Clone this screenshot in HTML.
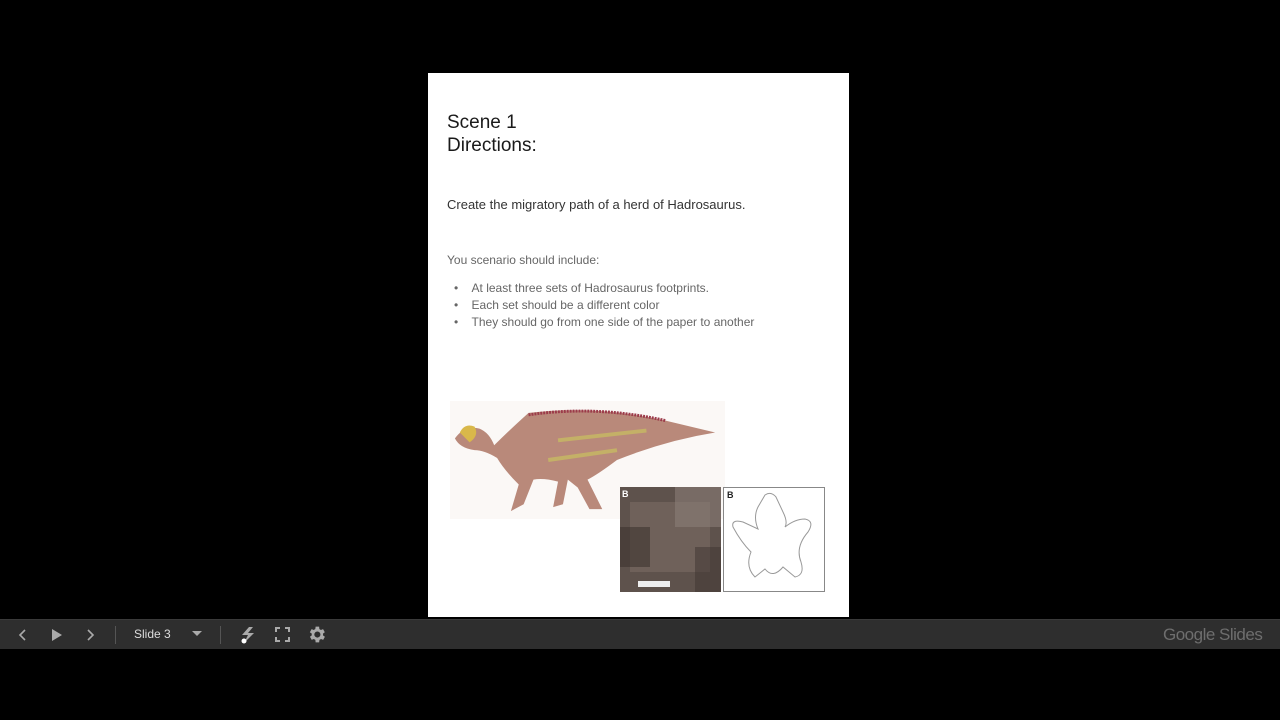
<!DOCTYPE html>
<html><head><meta charset="utf-8"><style>
html,body{margin:0;padding:0;background:#000;width:1280px;height:720px;overflow:hidden;font-family:"Liberation Sans",sans-serif;}
.slide{position:absolute;left:428px;top:73px;width:421px;height:544px;background:#fff;}
.t{position:absolute;color:#222;white-space:nowrap;}
.bar{position:absolute;left:0;top:619px;width:1280px;height:29px;background:#2e2e2e;border-top:1px solid #3a3a3a;}
.bar .i{position:absolute;color:#bdbdbd;}
.sep{position:absolute;top:6px;width:1px;height:18px;background:#555;}
</style></head><body>
<div class="slide">
  <div class="t" style="left:19px;top:38px;font-size:19px;line-height:23px;color:#1a1a1a;">Scene 1<br>Directions:</div>
  <div class="t" style="left:19px;top:124px;font-size:13px;color:#333;">Create the migratory path of a herd of Hadrosaurus.</div>
  <div class="t" style="left:19px;top:180px;font-size:12px;color:#666;">You scenario should include:</div>
  <div class="t" style="left:26px;top:207px;font-size:12px;color:#666;line-height:17px;">
    •&nbsp;&nbsp;&nbsp;&nbsp;At least three sets of Hadrosaurus footprints.<br>
    •&nbsp;&nbsp;&nbsp;&nbsp;Each set should be a different color<br>
    •&nbsp;&nbsp;&nbsp;&nbsp;They should go from one side of the paper to another</div>
  <svg style="position:absolute;left:22px;top:328px" width="275" height="118" viewBox="0 0 280 120">
    <rect width="280" height="120" fill="#fbf8f6"/>
    <path d="M5 38 Q15 24 30 28 Q40 32 45 45 Q60 30 80 12 Q150 4 220 20 L270 32 Q220 40 170 60 Q150 75 140 80 L150 100 L155 110 L142 110 L130 88 L120 80 L115 105 L105 108 L110 82 Q95 78 85 80 L75 105 L62 112 L70 85 Q55 70 48 58 Q35 50 25 50 Q10 48 5 38Z" fill="#b9897a"/>
    <path d="M80 14 Q150 4 220 20" stroke="#9c3b4a" stroke-width="3" fill="none" stroke-dasharray="2 1"/>
    <path d="M110 40 L200 30 M100 60 L170 50" stroke="#c9c060" stroke-width="4" fill="none" opacity=".7"/>
    <path d="M10 32 Q15 22 25 26 Q30 35 20 42 Z" fill="#d9b84a"/>
  </svg>
  <svg style="position:absolute;left:192px;top:414px" width="101" height="105">
    <rect width="101" height="105" fill="#5e524c"/>
    <rect x="10" y="15" width="80" height="70" fill="#7b6c64" opacity=".6"/>
    <rect x="55" y="0" width="46" height="40" fill="#8a7d76" opacity=".6"/>
    <rect x="0" y="40" width="30" height="40" fill="#3d332f" opacity=".6"/>
    <rect x="75" y="60" width="26" height="45" fill="#3d332f" opacity=".5"/>
    <rect x="18" y="94" width="32" height="6" fill="#eee"/>
    <text x="2" y="10" font-size="9" font-weight="bold" fill="#fff" font-family="Liberation Sans">B</text>
  </svg>
  <svg style="position:absolute;left:295px;top:414px" width="102" height="105">
    <rect x="0.5" y="0.5" width="101" height="104" fill="#fff" stroke="#888"/>
    <text x="4" y="11" font-size="9" font-weight="bold" fill="#222" font-family="Liberation Sans">B</text>
    <path d="M42 8 Q48 4 53 10 L60 25 Q65 35 62 40 Q72 32 82 32 Q92 34 85 45 Q72 60 78 75 Q82 88 72 90 L60 80 Q50 92 42 82 L32 90 Q22 80 28 65 Q18 55 10 40 Q8 32 20 35 L35 42 Q30 30 35 20 Z" fill="none" stroke="#999" stroke-width="1"/>
  </svg>
</div>
<div class="bar">
  <svg class="i" style="left:16px;top:8px" width="12" height="14"><path d="M9 2 L4 7 L9 12" stroke="#aaa" stroke-width="1.6" fill="none"/></svg>
  <svg class="i" style="left:51px;top:8px" width="12" height="14"><path d="M1 1 L11 7 L1 13Z" fill="#aaa"/></svg>
  <svg class="i" style="left:85px;top:8px" width="12" height="14"><path d="M3 2 L8 7 L3 12" stroke="#aaa" stroke-width="1.6" fill="none"/></svg>
  <div class="sep" style="left:115px"></div>
  <div class="i" style="left:134px;top:7px;font-size:12px;color:#ddd;">Slide 3</div>
  <svg class="i" style="left:192px;top:11px" width="10" height="6"><path d="M0 0 L10 0 L5 5Z" fill="#aaa"/></svg>
  <div class="sep" style="left:220px"></div>
  <svg class="i" style="left:240px;top:6px" width="16" height="18"><path d="M9 1 L2 9 L8 9 L4 17 L14 7 L8 7 L13 1Z" fill="#aaa"/><circle cx="4" cy="15" r="2.5" fill="#fff"/></svg>
  <svg class="i" style="left:275px;top:7px" width="15" height="15"><path d="M1 5 V1 H5 M10 1 H14 V5 M14 10 V14 H10 M5 14 H1 V10" stroke="#aaa" stroke-width="2" fill="none"/></svg>
  <svg class="i" style="left:306px;top:4px" width="21" height="21" viewBox="0 0 24 24"><path fill="#aaa" d="M19.4 13a7.5 7.5 0 0 0 0-2l2.1-1.6-2-3.5-2.5 1a7 7 0 0 0-1.7-1L15 3h-4l-.4 2.9a7 7 0 0 0-1.7 1l-2.5-1-2 3.5L6.6 11a7.5 7.5 0 0 0 0 2l-2.1 1.6 2 3.5 2.5-1a7 7 0 0 0 1.7 1L11 21h4l.4-2.9a7 7 0 0 0 1.7-1l2.5 1 2-3.5zM13 15.5a3.5 3.5 0 1 1 0-7 3.5 3.5 0 0 1 0 7z"/></svg>
  <div class="i" style="left:1163px;top:5px;font-size:17px;color:#6e6e6e;letter-spacing:-0.5px;">Google Slides</div>
</div>
</body></html>
